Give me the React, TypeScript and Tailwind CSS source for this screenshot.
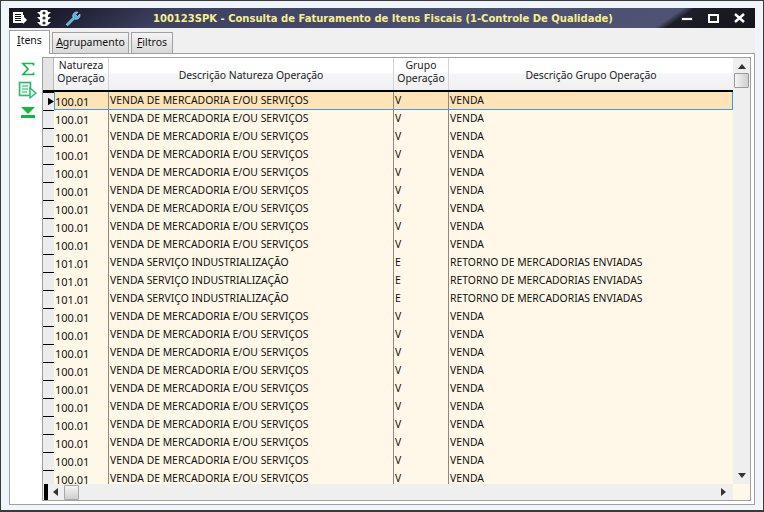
const font = 'font-["Noto_Sans",sans-serif]';

const rows = [
  ...Array(9).fill('v'),
  ...Array(3).fill('e'),
  ...Array(10).fill('v'),
];

function MenuIcon() {
  return (
    <svg width="16" height="16" viewBox="0 0 16 16">
      <path d="M1 2h10v3l1 0v8H1z" fill="#fff" />
      <path d="M3 4h6v1H3zM3 6h6v1H3zM3 8h6v1H3zM3 10h6v1H3z" fill="#111" />
      <path d="M11 6l4 4-4 4z" fill="#fff" />
    </svg>
  );
}

function TrafficIcon() {
  return (
    <svg width="18" height="18" viewBox="0 0 18 18">
      <rect x="5" y="1" width="8" height="16" rx="2" fill="#fff" />
      <path d="M2 3h3v3zM16 3h-3v3zM2 8h3v3zM16 8h-3v3zM2 13h3v3zM16 13h-3v3z" fill="#fff" />
      <circle cx="9" cy="4" r="1.6" fill="#333" />
      <circle cx="9" cy="9" r="1.6" fill="#333" />
      <circle cx="9" cy="14" r="1.6" fill="#333" />
    </svg>
  );
}

function WrenchIcon() {
  return (
    <svg width="18" height="18" viewBox="0 0 18 18">
      <path d="M2 15.500l7-7c-1-3 1-6 5-5.500l-2.500 2.500 2 2 2.500-2.500c.5 4-2.500 6-5.500 5l-6.500 6.500z" fill="#4fb4e8" stroke="#d8eefa" strokeWidth="0.6" />
    </svg>
  );
}

function SideIcons() {
  return (
    <div className="flex w-[32px] flex-col items-center pl-[4px] pt-[5px]">
      <svg width="14" height="14" viewBox="0 0 14 14">
        <path d="M12.500 3.500V1.500H2L7 7l-5 5.500h10.500v-2" fill="none" stroke="#16b84e" strokeWidth="1.700" />
      </svg>
      <svg width="20" height="18" viewBox="0 0 20 18" className="mt-[5px]">
        <rect x="1.500" y="1.500" width="11" height="13" fill="#e6f7ee" stroke="#35b57a" strokeWidth="1.600" />
        <path d="M4 5h6M4 8h6M4 11h5" stroke="#35b57a" strokeWidth="1.200" />
        <path d="M12 7l6 5-6 5z" fill="#d7f4e4" stroke="#35b57a" strokeWidth="1.400" />
      </svg>
      <svg width="14" height="11" viewBox="0 0 14 11" className="mt-[8px]">
        <path d="M0 0h14L7 7z" fill="#10b83c" />
        <rect x="0" y="8" width="14" height="3" fill="#10b83c" />
      </svg>
    </div>
  );
}

function Row({ kind, index }: { kind: string; index: number }) {
  const selected = index === 0;
  const venda = kind === 'v';
  return (
    <div className="flex h-[18px] shrink-0">
      <div className="flex w-[11px] shrink-0 items-center border-t border-black bg-[#ececec]">
        {selected && (
          <svg width="7" height="9" viewBox="0 0 7 9" className="ml-[5px]">
            <path d="M0 0l7 4.500L0 9z" fill="#000" />
          </svg>
        )}
      </div>
      <div className={`flex min-w-0 flex-1 text-[10.4px] leading-[16px] text-[#111] ${selected ? 'border-b border-[#3d9be9] bg-[#fde3b6] shadow-[inset_1px_0_0_#3d9be9,inset_-1px_0_0_#3d9be9]' : 'bg-[#fff8e8]'}`}>
        <div className="w-[55px] shrink-0 border-r border-[#8a8a8a] pl-[1px] pt-[2px] text-[11px]">{venda ? '100.01' : '101.01'}</div>
        <div className="w-[285px] shrink-0 border-r border-[#8a8a8a] pl-[1px]">{venda ? 'VENDA DE MERCADORIA E/OU SERVIÇOS' : 'VENDA SERVIÇO INDUSTRIALIZAÇÃO'}</div>
        <div className="w-[55px] shrink-0 border-r border-[#8a8a8a] pl-[1px]">{venda ? 'V' : 'E'}</div>
        <div className="min-w-0 flex-1 pl-[1px]">{venda ? 'VENDA' : 'RETORNO DE MERCADORIAS ENVIADAS'}</div>
      </div>
    </div>
  );
}

function Grid() {
  return (
    <div className="flex min-h-0 flex-1 flex-col border border-[#a0a0a0]">
      <div className="flex min-h-0 flex-1">
        <div className="flex min-w-0 flex-1 flex-col">
          {/* header */}
          <div className="flex h-[34px] shrink-0 border-b-2 border-black bg-[linear-gradient(#ffffff_0%,#ffffff_45%,#f4f6f8_50%,#f0f0f0_100%)] text-center text-[10.4px] leading-[13px] text-[#222]">
            <div className="w-[11px] shrink-0 border-r border-[#bbb] bg-[#e4e4e4]" />
            <div className="w-[55px] shrink-0 border-r border-[#d5d5d5] pt-[1px]">Natureza<br />Operação</div>
            <div className="flex w-[285px] shrink-0 items-center justify-center border-r border-[#d5d5d5] pt-[2px]">Descrição Natureza Operação</div>
            <div className="w-[55px] shrink-0 border-r border-[#d5d5d5] pt-[1px]">Grupo<br />Operação</div>
            <div className="flex min-w-0 flex-1 items-center justify-center pt-[2px]">Descrição Grupo Operação</div>
          </div>
          <div className="flex min-h-0 flex-1 flex-col overflow-hidden">
            {rows.map((kind, i) => (
              <Row key={i} kind={kind} index={i} />
            ))}
          </div>
        </div>
        {/* vertical scrollbar */}
        <div className="flex w-[17px] shrink-0 flex-col items-center bg-[#efefef]">
          <svg width="8" height="5" viewBox="0 0 8 5" className="mt-[6px]">
            <path d="M4 0l4 5H0z" fill="#333" />
          </svg>
          <div className="mt-[4px] h-[15px] w-[15px] rounded-[1px] border border-[#9a9a9a] bg-[linear-gradient(90deg,#f4f4f4,#cfcfcf)]" />
          <svg width="8" height="5" viewBox="0 0 8 5" className="mb-[6px] mt-auto">
            <path d="M0 0h8L4 5z" fill="#333" />
          </svg>
        </div>
      </div>
      {/* horizontal scrollbar */}
      <div className="flex h-[16px] shrink-0 bg-[#efefef]">
        <div className="ml-[1px] w-[4px] shrink-0 bg-black" />
        <div className="flex min-w-0 flex-1 items-center">
          <svg width="5" height="8" viewBox="0 0 5 8" className="ml-[5px]">
            <path d="M5 0v8L0 4z" fill="#333" />
          </svg>
          <div className="ml-[6px] h-[15px] w-[15px] rounded-[1px] border border-[#a8a8a8] bg-[linear-gradient(#f4f4f4,#cfcfcf)]" />
          <svg width="5" height="8" viewBox="0 0 5 8" className="ml-auto mr-[7px]">
            <path d="M0 0l5 4-5 4z" fill="#333" />
          </svg>
        </div>
        <div className="w-[17px] shrink-0 bg-[#fff8e8]" />
      </div>
    </div>
  );
}

export default function App() {
  return (
    <div className={`flex h-[512px] w-[764px] flex-col overflow-hidden border-x border-t border-b-2 border-[#3a3a3a] bg-[#f0f5fb] px-[8px] pb-[5px] pt-[7px] ${font}`}>
      {/* title bar */}
      <div className="flex h-[20px] shrink-0 items-center bg-[linear-gradient(146deg,#17171f_0%,#1c1c2c_7%,#3d4060_22%,#4c5070_60%,#4f5272_87%,#1e1e2a_88.500%,#14141a_100%)] pl-[3px] pr-[10px]">
        <MenuIcon />
        <div className="ml-[7px]"><TrafficIcon /></div>
        <div className="ml-[11px]"><WrenchIcon /></div>
        <div className="ml-[71px] whitespace-nowrap font-['DejaVu_Sans',sans-serif] text-[10px] font-bold text-[#f5f08a]">
          100123SPK - Consulta de Faturamento de Itens Fiscais (1-Controle De Qualidade)
        </div>
        <div className="ml-auto flex items-center">
          <div className="mt-[1px] h-[4px] w-[12px] border border-[#333] bg-white" />
          <div className="ml-[15px] h-[9px] w-[11px] border-2 border-white bg-[#222]" />
          <svg width="11" height="10" viewBox="0 0 11 10" className="ml-[15px]">
            <path d="M1 1l9 8M10 1l-9 8" stroke="#fff" strokeWidth="2.400" />
          </svg>
        </div>
      </div>
      {/* tabs + panel */}
      <div className="flex min-h-0 flex-1 flex-col bg-[#f0f0f0]">
        <div className="flex h-[25px] shrink-0 items-end gap-[2px] text-[10.5px] text-[#111]">
          <div className="relative z-10 -mb-px flex h-[24px] w-[41px] items-center justify-center border-x border-t border-[#a0a0a0] bg-white pb-[3px]"><span><u>I</u>tens</span></div>
          <div className="flex h-[21px] w-[77px] items-center justify-center border-x border-t border-[#a0a0a0] bg-[linear-gradient(#f4f4f4,#d8d8d8)]"><span><u>A</u>grupamento</span></div>
          <div className="flex h-[21px] w-[42px] items-center justify-center border-x border-t border-[#a0a0a0] bg-[linear-gradient(#f4f4f4,#d8d8d8)]"><span><u>F</u>iltros</span></div>
        </div>
        <div className="flex min-h-0 flex-1 border border-[#a0a0a0] bg-white pb-[3px] pr-[3px] pt-[3px]">
          <SideIcons />
          <Grid />
        </div>
      </div>
    </div>
  );
}
